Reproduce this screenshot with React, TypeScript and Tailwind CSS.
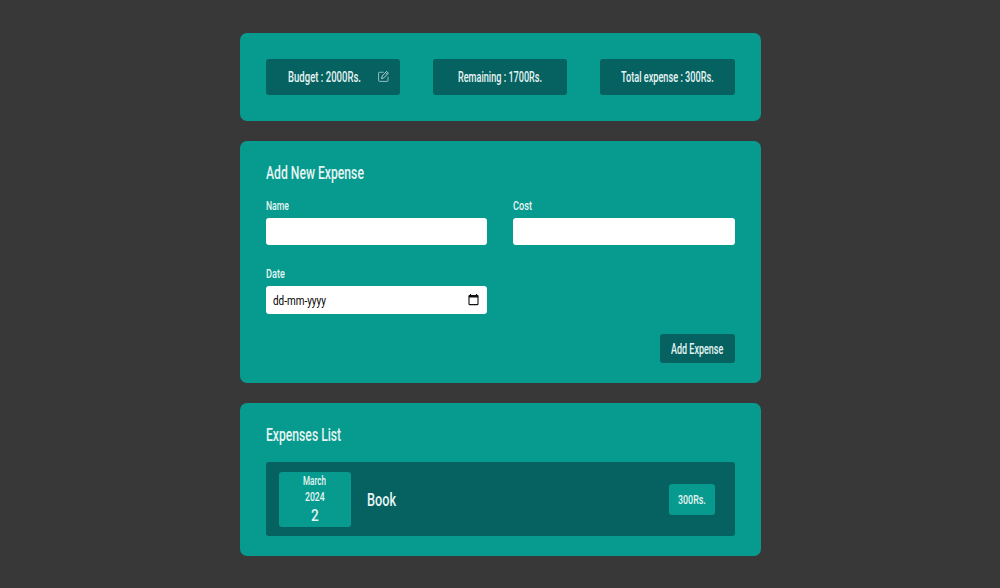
import { useLayoutEffect, useRef, useState, type ReactNode } from "react";

/** Condenses a line of text horizontally so that it fills its own box. */
function Condensed({ className, children }: { className: string; children: ReactNode }) {
  const box = useRef<HTMLSpanElement>(null);
  const line = useRef<HTMLSpanElement>(null);
  const [scale, setScale] = useState(0.7);

  useLayoutEffect(() => {
    if (box.current && line.current) {
      setScale(box.current.offsetWidth / line.current.offsetWidth);
    }
  }, [children]);

  return (
    <span ref={box} className={`flex shrink-0 whitespace-nowrap ${className}`}>
      <span ref={line} className="block shrink-0 origin-left" style={{ transform: `scaleX(${scale})` }}>
        {children}
      </span>
    </span>
  );
}

function EditIcon() {
  return (
    <svg viewBox="0 0 22 22" className="h-[11px] w-[11px] text-[#c5dcdc]" fill="none" stroke="currentColor" strokeWidth="1.500" strokeLinejoin="round" strokeLinecap="round">
      <path d="M10.500 2.500H2.800A1.600 1.600 0 0 0 1.200 4.100v15.100a1.600 1.600 0 0 0 1.600 1.600h15.600a1.600 1.600 0 0 0 1.600-1.600V12" />
      <path d="M17.800 1.200l3 3L11.200 14.100 7 15.200l1.200-4.200z" strokeWidth="1.800" />
      <path d="M15.600 3.600l2.900 2.900" />
    </svg>
  );
}

function CalendarIcon() {
  return (
    <svg viewBox="0 0 11 12" className="h-3 w-[11px]" fill="none">
      <path d="M2.500 0v2M8.500 0v2" stroke="#111" strokeWidth="1.200" />
      <rect x="1" y="1.600" width="9" height="9" rx="0.600" stroke="#111" strokeWidth="1.100" />
      <path d="M0.800 2.500h9.400" stroke="#111" strokeWidth="2" />
    </svg>
  );
}

function Summary() {
  const chip = "flex h-9 w-[134.500px] items-center justify-center rounded-[3px] bg-[#066161]";
  return (
    <section className="flex h-[88px] items-center justify-between rounded-[7px] bg-[#079a8e] px-[26px]">
      <div className={`${chip} relative`}>
        <Condensed className="mr-4 w-[73px]">Budget : 2000Rs.</Condensed>
        <button aria-label="Edit budget" className="absolute top-[12px] right-[11px]">
          <EditIcon />
        </button>
      </div>
      <div className={chip}>
        <Condensed className="w-[84px]">Remaining : 1700Rs.</Condensed>
      </div>
      <div className={chip}>
        <Condensed className="w-[93px]">Total expense : 300Rs.</Condensed>
      </div>
    </section>
  );
}

function ExpenseForm() {
  return (
    <section className="mt-5 flex h-[242px] flex-col rounded-[7px] bg-[#079a8e] px-[26px] pt-5">
      <h2 className="flex text-[18px] font-medium leading-6">
        <Condensed className="w-[98px]">Add New Expense</Condensed>
      </h2>
      <div className="mt-[11px] grid grid-cols-2 gap-x-[26px]">
        <label>
          <Condensed className="w-[23px] text-[13.500px] leading-[18px]">Name</Condensed>
          <input className="mt-1 block h-[27px] w-full rounded-[3px] bg-white px-[7px] text-black outline-none" />
        </label>
        <label>
          <Condensed className="w-[19px] text-[13.500px] leading-[18px]">Cost</Condensed>
          <input className="mt-1 block h-[27px] w-full rounded-[3px] bg-white px-[7px] text-black outline-none" />
        </label>
        <div className="mt-[19px]">
          <Condensed className="w-[19px] text-[13.500px] leading-[18px]">Date</Condensed>
          <div className="mt-1 flex h-7 items-center justify-between rounded-[3px] bg-white pr-2 pl-[7px] text-[13.500px] font-normal text-black">
            <Condensed className="w-[53px]">dd-mm-yyyy</Condensed>
            <CalendarIcon />
          </div>
        </div>
      </div>
      <button className="mt-5 flex h-[29px] w-[75px] items-center justify-center self-end rounded-[3px] bg-[#066161] pt-px">
        <Condensed className="w-[52px]">Add Expense</Condensed>
      </button>
    </section>
  );
}

function ExpenseList() {
  return (
    <section className="mt-5 h-[153px] rounded-[7px] bg-[#079a8e] px-[26px] pt-5">
      <h2 className="flex text-[18px] font-medium leading-6">
        <Condensed className="w-[75px]">Expenses List</Condensed>
      </h2>
      <div className="mt-[15px] flex h-[74px] items-center rounded-[3px] bg-[#066161] pr-[19px] pl-[13px]">
        <div className="flex h-[55px] w-[72px] flex-col items-center rounded-[3px] bg-[#079a8e] pt-px text-[13px]">
          <Condensed className="w-[23px] leading-4">March</Condensed>
          <Condensed className="w-5 leading-[15px]">2024</Condensed>
          <Condensed className="w-[7.500px] text-[17px] leading-[22px]">2</Condensed>
        </div>
        <Condensed className="ml-4 w-[29px] pt-0.5 text-[18px] font-medium leading-6">Book</Condensed>
        <div className="mr-px ml-auto flex h-[31px] w-[46px] items-center justify-center rounded-[3px] bg-[#079a8e] pt-px text-[13px]">
          <Condensed className="w-[28px]">300Rs.</Condensed>
        </div>
      </div>
    </section>
  );
}

export default function App() {
  return (
    <main className="flex min-h-screen justify-center bg-[#383838] pt-[33px] font-['Roboto','Liberation_Sans',sans-serif] text-[14px] font-medium leading-5 text-[#e6f5f3]">
      <div className="w-[521px]">
        <Summary />
        <ExpenseForm />
        <ExpenseList />
      </div>
    </main>
  );
}
